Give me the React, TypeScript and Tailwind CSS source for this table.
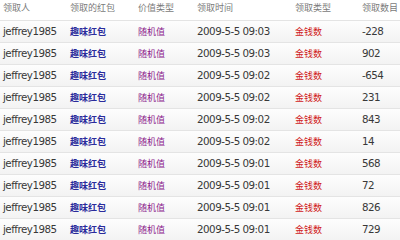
const rows = [
  { time: '2009-5-5 09:03', amount: '-228' },
  { time: '2009-5-5 09:03', amount: '902' },
  { time: '2009-5-5 09:02', amount: '-654' },
  { time: '2009-5-5 09:02', amount: '231' },
  { time: '2009-5-5 09:02', amount: '843' },
  { time: '2009-5-5 09:02', amount: '14' },
  { time: '2009-5-5 09:01', amount: '568' },
  { time: '2009-5-5 09:01', amount: '72' },
  { time: '2009-5-5 09:01', amount: '826' },
  { time: '2009-5-5 09:01', amount: '729' }
]

const cols = 'grid grid-cols-[67px_68px_59px_98px_67px_1fr] pl-[3px] items-center'
const cjk = "font-['Noto_Sans_CJK_SC',sans-serif] text-[9px]"
const latin = "font-['DejaVu_Sans',sans-serif] text-[10.3px] tracking-[-0.5px] text-[#383838]"

export default function App() {
  return (
    <div className="w-[400px] h-[240px] overflow-hidden bg-white">
      {/* header */}
      <div className={`${cols} h-[21px] pb-[4px] border-b border-[#e4e4e4] text-[#7a7a7a] ${cjk}`}>
        <span>领取人</span>
        <span>领取的红包</span>
        <span>价值类型</span>
        <span>领取时间</span>
        <span>领取类型</span>
        <span>领取数目</span>
      </div>

      {rows.map((row, i) => (
        <div
          key={i}
          className={`${cols} h-[22px] border-b border-[#e4e4e4] bg-gradient-to-b from-[#fdfdfd] to-[#f3f3f3]`}
        >
          <span className={latin}>jeffrey1985</span>
          <span className={`${cjk} font-semibold text-[#2b2b9c]`}>趣味红包</span>
          <span className={`${cjk} text-[#8b1a8b]`}>随机值</span>
          <span className={latin}>{row.time}</span>
          <span className={`${cjk} text-[#d01818]`}>金钱数</span>
          <span className={latin}>{row.amount}</span>
        </div>
      ))}
    </div>
  )
}
